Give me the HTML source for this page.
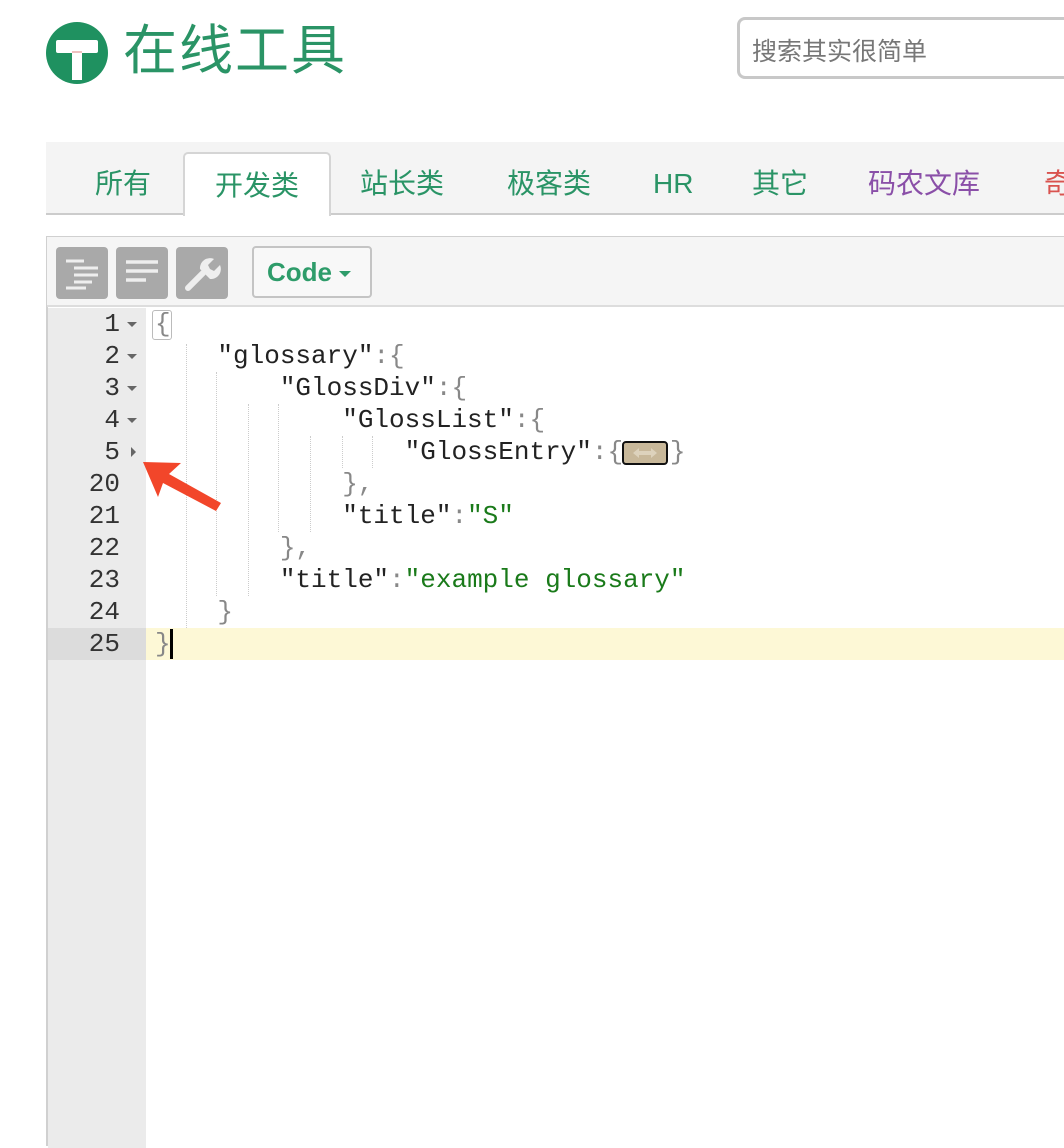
<!DOCTYPE html>
<html><head><meta charset="utf-8"><style>
*{margin:0;padding:0;box-sizing:border-box}
body{width:1064px;height:1140px;overflow:hidden;background:#fff;position:relative;font-family:"Liberation Sans","Noto Sans CJK SC",sans-serif}
.abs{position:absolute}
.logo-t{left:123px;top:16px;font-size:54px;color:#2a9466;letter-spacing:2px;line-height:70px}
.search{left:737px;top:17px;width:340px;height:62px;border:3px solid #c8c8c8;border-radius:8px;font-size:25px;color:#777;padding:12px 0 0 12px}
.tabs{left:46px;top:142px;width:1030px;height:73px;background:#f4f4f4;border-bottom:2px solid #ccc}
.tab{position:absolute;top:20px;font-size:28px;line-height:44px;color:#2a9466}
.tab.act{top:10px;left:137px;width:148px;height:64px;background:#fff;border:2px solid #d5d5d5;border-bottom:none;border-radius:5px 5px 0 0;text-align:center;padding-top:10px}
.editor{left:46px;top:236px;width:1030px;height:910px;border:2px solid #d0d0d0;border-right:none;border-bottom:none}
.tb{left:47px;top:237px;width:1020px;height:70px;background:#f5f5f5;border-bottom:2px solid #ddd}
.btn{position:absolute;top:10px;width:52px;height:52px;background:#a9a9a9;border-radius:4px}
.gut{left:48px;top:308px;width:98px;height:840px;background:#ebebeb}
.code{font-family:"Liberation Mono",monospace;font-size:26px;line-height:32px}
.ln{position:absolute;left:48px;width:72px;text-align:right;color:#333;font-family:"Liberation Mono",monospace;font-size:26px;line-height:32px}
.fd{position:absolute;left:127px;width:0;height:0;border-left:5px solid transparent;border-right:5px solid transparent;border-top:5px solid #666}
.line{position:absolute;left:155px;white-space:pre;color:#222}
.p{color:#888}.s{color:#1a7a1a}
.g{position:absolute;width:0;border-left:1px dotted #ccc}
</style></head><body>
<svg class="abs" style="left:45px;top:21px" width="64" height="64" viewBox="0 0 64 64"><circle cx="32" cy="32" r="31" fill="#1f9160"/><rect x="11" y="19" width="42" height="13" rx="2" fill="#fff"/><rect x="27" y="30" width="10" height="29" fill="#fff"/><rect x="27" y="30" width="10" height="2" fill="#f0c0c0"/></svg>
<div class="abs logo-t">在线工具</div>
<div class="abs search">搜索其实很简单</div>
<div class="abs tabs">
<div class="tab" style="left:49px">所有</div>
<div class="tab act">开发类</div>
<div class="tab" style="left:314px">站长类</div>
<div class="tab" style="left:461px">极客类</div>
<div class="tab" style="left:607px;font-family:'Liberation Sans',sans-serif">HR</div>
<div class="tab" style="left:706px">其它</div>
<div class="tab" style="left:822px;color:#8a4fa8">码农文库</div>
<div class="tab" style="left:998px;color:#d9534f">奇</div>
</div>
<div class="abs editor"></div>
<div class="abs tb">
<div class="btn" style="left:9px"><svg width="52" height="52"><g stroke="#eee" stroke-width="3"><line x1="10" y1="14" x2="28" y2="14"/><line x1="18" y1="21" x2="42" y2="21"/><line x1="18" y1="28" x2="42" y2="28"/><line x1="18" y1="35" x2="36" y2="35"/><line x1="10" y1="41" x2="30" y2="41"/></g></svg></div>
<div class="btn" style="left:69px"><svg width="52" height="52"><g stroke="#eee" stroke-width="3.5"><line x1="10" y1="15" x2="42" y2="15"/><line x1="10" y1="24" x2="42" y2="24"/><line x1="10" y1="33" x2="30" y2="33"/></g></svg></div>
<div class="btn" style="left:129px"><svg width="52" height="52"><line x1="12" y1="41" x2="27" y2="26" stroke="#eee" stroke-width="6" stroke-linecap="round"/><path d="M24 22 a10 10 0 0 1 14 -10 l-6 6 l2 4 l4 2 l6 -6 a10 10 0 0 1 -10 14z" fill="#eee"/></svg></div>
<div style="position:absolute;left:205px;top:9px;width:120px;height:52px;border:2px solid #c4c4c4;border-radius:4px;background:#f8f8f8;color:#2e9c6a;font-weight:bold;font-size:26px;padding:9px 0 0 13px">Code <span style="display:inline-block;width:0;height:0;border-left:6px solid transparent;border-right:6px solid transparent;border-top:6px solid #2e9c6a;vertical-align:middle"></span></div>
</div>
<div class="abs gut"></div>
<div class="abs" style="left:146px;top:628px;width:920px;height:32px;background:#fdf8d6"></div>
<div class="abs" style="left:48px;top:628px;width:98px;height:32px;background:#dcdcdc"></div>
<div class="g" style="left:186px;top:344px;height:284px"></div>
<div class="g" style="left:216px;top:372px;height:224px"></div>
<div class="g" style="left:248px;top:404px;height:192px"></div>
<div class="g" style="left:278px;top:404px;height:128px"></div>
<div class="g" style="left:310px;top:436px;height:96px"></div>
<div class="g" style="left:342px;top:436px;height:32px"></div>
<div class="g" style="left:372px;top:436px;height:32px"></div>
<div class="code">
<div class="ln" style="top:308px">1</div><div class="fd" style="top:322px"></div>
<div class="ln" style="top:340px">2</div><div class="fd" style="top:354px"></div>
<div class="ln" style="top:372px">3</div><div class="fd" style="top:386px"></div>
<div class="ln" style="top:404px">4</div><div class="fd" style="top:418px"></div>
<div class="ln" style="top:436px">5</div><div style="position:absolute;left:131px;top:447px;width:0;height:0;border-top:5px solid transparent;border-bottom:5px solid transparent;border-left:5px solid #666"></div>
<div class="ln" style="top:468px">20</div>
<div class="ln" style="top:500px">21</div>
<div class="ln" style="top:532px">22</div>
<div class="ln" style="top:564px">23</div>
<div class="ln" style="top:596px">24</div>
<div class="ln" style="top:628px">25</div>
<div class="abs" style="left:152px;top:310px;width:20px;height:30px;border:1px solid #bbb;border-radius:3px"></div>
<div class="line" style="top:308px"><span class="p">{</span></div>
<div class="line" style="top:340px">    "glossary"<span class="p">:{</span></div>
<div class="line" style="top:372px">        "GlossDiv"<span class="p">:{</span></div>
<div class="line" style="top:404px">            "GlossList"<span class="p">:{</span></div>
<div class="line" style="top:436px">                "GlossEntry"<span class="p">:{   }</span></div>
<div class="line" style="top:468px">            <span class="p">},</span></div>
<div class="line" style="top:500px">            "title"<span class="p">:</span><span class="s">"S"</span></div>
<div class="line" style="top:532px">        <span class="p">},</span></div>
<div class="line" style="top:564px">        "title"<span class="p">:</span><span class="s">"example glossary"</span></div>
<div class="line" style="top:596px">    <span class="p">}</span></div>
<div class="line" style="top:628px"><span class="p">}</span></div>
</div>
<div class="abs" style="left:622px;top:441px;width:46px;height:24px;background:#c8b89a;border:2px solid #111;border-radius:4px"><svg width="42" height="20" style="display:block"><path d="M9 10 L15 5 L15 8 L27 8 L27 5 L33 10 L27 15 L27 12 L15 12 L15 15Z" fill="#ddd2bc"/></svg></div>
<div class="abs" style="left:170px;top:629px;width:3px;height:30px;background:#000"></div>
<svg class="abs" style="left:0;top:0" width="1064" height="1140"><polygon points="143,462 181,463 169,474 221,503 216,511 163,483 158,497" fill="#f2462a"/></svg>
</body></html>
